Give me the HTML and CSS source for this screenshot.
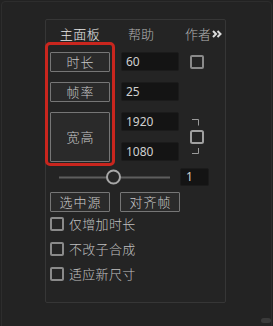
FILE: index.html
```html
<!DOCTYPE html>
<html lang="zh">
<head>
<meta charset="utf-8">
<link rel="stylesheet" href="styles.css">
</head>
<body>
<div class="window">
  <div class="panel">
    <div class="tabs">
      <div class="tab tab-main">主面板</div>
      <div class="tab tab-help">帮助</div>
      <div class="tab tab-author">作者</div>
      <svg class="more" width="10" height="8" viewBox="0 0 10 8"><path d="M1 1l3 3-3 3M5.5 1l3 3-3 3" fill="none" stroke="#dcdcdc" stroke-width="2"/></svg>
    </div>
    <div class="row row1">
      <div class="btn">时长</div>
      <div class="input">60</div>
      <div class="check check-top"></div>
    </div>
    <div class="row row2">
      <div class="btn">帧率</div>
      <div class="input">25</div>
    </div>
    <div class="row row3">
      <div class="btn btn-tall">宽高</div>
      <div class="inputs">
        <div class="input">1920</div>
        <div class="input">1080</div>
      </div>
      <svg class="link" width="16" height="50" viewBox="0 0 16 50">
        <path d="M3 7.5h6.5v6" fill="none" stroke="#9a9a9a" stroke-width="1"/>
        <rect x="2" y="19" width="12" height="12" rx="1.5" fill="none" stroke="#a0a0a0" stroke-width="2"/>
        <path d="M9.5 36v5.5h-6.5" fill="none" stroke="#9a9a9a" stroke-width="1"/>
      </svg>
    </div>
    <div class="row row-slider">
      <svg class="slider" width="125" height="18" viewBox="0 0 125 18">
        <line x1="9" y1="9.5" x2="120" y2="9.5" stroke="#5e5e5e" stroke-width="2"/>
        <circle cx="63.5" cy="9" r="6.5" fill="#262626" stroke="#a8a8a8" stroke-width="2"/>
      </svg>
      <div class="input input-small">1</div>
    </div>
    <div class="row row-btns">
      <div class="btn">选中源</div>
      <div class="btn">对齐帧</div>
    </div>
    <div class="opt"><span class="check"></span><span class="label">仅增加时长</span></div>
    <div class="opt"><span class="check"></span><span class="label">不改子合成</span></div>
    <div class="opt"><span class="check"></span><span class="label">适应新尺寸</span></div>
    <div class="annotation"></div>
  </div>
  <div class="grip"></div>
</div>
</body>
</html>
```
FILE: styles.css
```css
html, body {
  margin: 0;
  padding: 0;
  background: #222222;
  width: 273px;
  height: 326px;
  overflow: hidden;
}
body {
  font-family: "Noto Sans CJK SC", "Noto Sans", sans-serif;
  font-weight: 300;
  color: #c4c4c4;
}
.window {
  position: relative;
  box-sizing: border-box;
  margin: 1px 0 0 1px;
  width: 271px;
  height: 330px;
  border: 1px solid #2d2d2d;
  border-radius: 4px;
  background: #232323;
  padding: 17px 0 0 43px;
}
.panel {
  position: relative;
  box-sizing: border-box;
  width: 181px;
  height: 284px;
  border: 1px solid #363636;
  border-radius: 2px;
  padding: 0 0 0 4px;
  background: #242424;
}
.tabs {
  display: flex;
  align-items: center;
  height: 27px;
  font-size: 13px;
  line-height: 1;
}
.tab { white-space: nowrap; }
.tab-main { width: 60px; text-align: center; color: #e6e6e6; letter-spacing: 0.5px; }
.tab-help { width: 62px; text-align: center; color: #b2b2b2; }
.tab-author { margin-left: 13px; width: 26px; color: #b2b2b2; }
.more { margin-left: 1px; }
.row {
  display: flex;
  align-items: flex-start;
}
.row1 { margin-top: 5px; }
.row2 { margin-top: 10px; }
.row3 { margin-top: 10px; }
.row-slider { margin-top: 6px; align-items: center; }
.row-btns { margin-top: 6px; gap: 10px; }
.btn {
  box-sizing: border-box;
  width: 60px;
  height: 20px;
  border: 1px solid #767676;
  border-radius: 1px;
  background: #2a2a2a;
  font-size: 13px;
  line-height: 18px;
  text-align: center;
  letter-spacing: 1px;
  padding-left: 1px;
  color: #c8c8c8;
}
.btn-tall { height: 50px; line-height: 48px; }
.input {
  box-sizing: border-box;
  width: 58px;
  height: 19px;
  margin-left: 11px;
  border-radius: 2px;
  background: #141414;
  border: 1px solid #1b1b1b;
  font-family: "Noto Sans", sans-serif;
  font-weight: 400;
  font-size: 12px;
  line-height: 17px;
  padding-left: 4px;
  color: #d0d0d0;
}
.inputs {
  display: flex;
  flex-direction: column;
  gap: 11px;
}
.inputs .input { margin-left: 11px; }
.input-small {
  width: 29px;
  height: 18px;
  margin-left: 5px;
  line-height: 16px;
  padding-left: 5px;
}
.check {
  display: block;
  box-sizing: border-box;
  width: 14px;
  height: 14px;
  border: 2px solid #8a8a8a;
  border-radius: 2px;
  flex: none;
}
.check-top { margin-left: 11px; margin-top: 3px; }
.link { margin-left: 10px; }
.opt {
  display: flex;
  align-items: center;
  height: 14px;
  margin-top: 11px;
}
.row-btns + .opt { margin-top: 5px; }
.label {
  margin-left: 5px;
  font-size: 13px;
  line-height: 14px;
  color: #c0c0c0;
  letter-spacing: 0.3px;
}
.annotation {
  position: absolute;
  left: -1px;
  top: 22px;
  box-sizing: border-box;
  width: 70px;
  height: 124px;
  border: 3px solid #c9261e;
  border-radius: 5px;
}
.grip {
  position: absolute;
  left: 259px;
  top: 316px;
  width: 10px;
  height: 5px;
  border-radius: 3px;
  background: #3a3a3a;
}
```
